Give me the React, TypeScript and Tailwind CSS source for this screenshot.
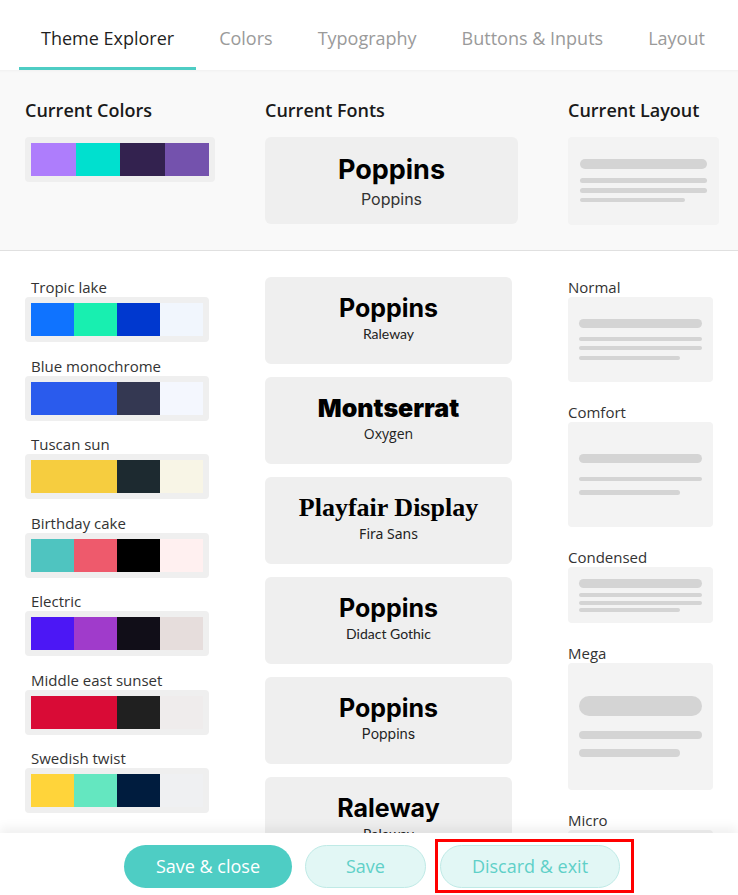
import React from "react";

const UI = { fontFamily: '"Open Sans", "Noto Sans", sans-serif' };

type Sw = { c: string; span?: number };

const current: Sw[] = [
  { c: "#ae7dfc" },
  { c: "#00e0cf" },
  { c: "#33224f" },
  { c: "#7452ad" },
];

const palettes: { name: string; sw: Sw[] }[] = [
  { name: "Tropic lake", sw: [{ c: "#0f73ff" }, { c: "#18efb0" }, { c: "#0038cf" }, { c: "#f1f6fd" }] },
  { name: "Blue monochrome", sw: [{ c: "#2a5bed", span: 2 }, { c: "#343852" }, { c: "#f4f7fe" }] },
  { name: "Tuscan sun", sw: [{ c: "#f6cd3f", span: 2 }, { c: "#1d2a30" }, { c: "#f8f5e6" }] },
  { name: "Birthday cake", sw: [{ c: "#4fc4c0" }, { c: "#ee5a6c" }, { c: "#000000" }, { c: "#fff0f0" }] },
  { name: "Electric", sw: [{ c: "#4c17f5" }, { c: "#a03bcb" }, { c: "#110e18" }, { c: "#e6dddc" }] },
  { name: "Middle east sunset", sw: [{ c: "#d90b36", span: 2 }, { c: "#202020" }, { c: "#efecec" }] },
  { name: "Swedish twist", sw: [{ c: "#ffd43a" }, { c: "#64e7c0" }, { c: "#001c3e" }, { c: "#eff0f2" }] },
  { name: "Aqua marine", sw: [{ c: "#2ec4d6" }, { c: "#1b8fa6" }, { c: "#0d2b3a" }, { c: "#eef8fa" }] },
];

const fonts: { t: string; tf: string; tw: string; ts: string; s: string; sf: string }[] = [
  { t: "Poppins", tf: '"Inter", sans-serif', tw: "font-bold", ts: "text-[25px]", s: "Raleway", sf: '"Lato", sans-serif' },
  { t: "Montserrat", tf: '"Inter", sans-serif', tw: "font-black", ts: "text-[25px]", s: "Oxygen", sf: '"Open Sans", sans-serif' },
  { t: "Playfair Display", tf: '"Liberation Serif", serif', tw: "font-bold", ts: "text-[26px]", s: "Fira Sans", sf: '"Noto Sans", sans-serif' },
  { t: "Poppins", tf: '"Inter", sans-serif', tw: "font-bold", ts: "text-[25px]", s: "Didact Gothic", sf: '"Lato", sans-serif' },
  { t: "Poppins", tf: '"Inter", sans-serif', tw: "font-bold", ts: "text-[25px]", s: "Poppins", sf: '"Inter", sans-serif' },
  { t: "Raleway", tf: '"Inter", sans-serif', tw: "font-bold", ts: "text-[25px]", s: "Raleway", sf: '"Lato", sans-serif' },
];

function Swatches({ sw, big }: { sw: Sw[]; big?: boolean }) {
  return (
    <div className={`flex rounded-[4px] bg-[#efefef] p-[6px] ${big ? "w-[190px]" : "w-[184px] h-[45px]"}`}>
      <div className={`flex w-full ${big ? "h-[33px]" : "h-[33px]"}`}>
        {sw.map((s, i) => (
          <div key={i} style={{ backgroundColor: s.c, flexGrow: s.span ?? 1, flexBasis: 0 }} />
        ))}
      </div>
    </div>
  );
}

const Bar = ({ cls }: { cls: string }) => <div className={`rounded-full bg-[#d4d4d4] ${cls}`} />;

function LayoutNormal() {
  return (
    <div className="h-[85px] w-[145px] rounded-[4px] bg-[#f3f3f3] px-[11px] pt-[22px]">
      <Bar cls="h-[9px] w-full" />
      <Bar cls="mt-[9px] h-[4px] w-full" />
      <Bar cls="mt-[5px] h-[4px] w-full" />
      <Bar cls="mt-[6px] h-[4px] w-[101px]" />
    </div>
  );
}

function LayoutComfort() {
  return (
    <div className="h-[105px] w-[145px] rounded-[4px] bg-[#f3f3f3] px-[11px] pt-[32px]">
      <Bar cls="h-[9px] w-full" />
      <Bar cls="mt-[14px] h-[4px] w-full" />
      <Bar cls="mt-[9px] h-[5px] w-[101px]" />
    </div>
  );
}

function LayoutCondensed() {
  return (
    <div className="h-[56px] w-[145px] rounded-[4px] bg-[#f3f3f3] px-[11px] pt-[12px]">
      <Bar cls="h-[9px] w-full" />
      <Bar cls="mt-[5px] h-[4px] w-full" />
      <Bar cls="mt-[4px] h-[4px] w-full" />
      <Bar cls="mt-[3px] h-[4px] w-[101px]" />
    </div>
  );
}

function LayoutMega() {
  return (
    <div className="h-[127px] w-[145px] rounded-[4px] bg-[#f3f3f3] px-[11px] pt-[33px]">
      <Bar cls="h-[20px] w-full" />
      <Bar cls="mt-[15px] h-[8px] w-full" />
      <Bar cls="mt-[10px] h-[8px] w-[101px]" />
    </div>
  );
}

const layouts: { name: string; el: React.ReactNode }[] = [
  { name: "Normal", el: <LayoutNormal /> },
  { name: "Comfort", el: <LayoutComfort /> },
  { name: "Condensed", el: <LayoutCondensed /> },
  { name: "Mega", el: <LayoutMega /> },
  { name: "Micro", el: <LayoutCondensed /> },
];

export default function App() {
  const tabs = ["Theme Explorer", "Colors", "Typography", "Buttons & Inputs", "Layout"];
  return (
    <div className="flex h-[895px] w-[738px] flex-col overflow-hidden bg-white" style={UI}>
      {/* Tabs */}
      <div className="flex h-[70px] shrink-0 items-stretch pl-[19px]">
        {tabs.map((t, i) => (
          <div
            key={t}
            className={`px-[22px] pt-[25px] text-[18px] leading-[26px] ${
              i === 0 ? "border-b-[3px] border-[#4ecdc4] text-[#1f1f1f]" : "border-b-[3px] border-transparent text-[#9a9a9a]"
            } ${i === 0 ? "" : "ml-[1px]"}`}
          >
            {t}
          </div>
        ))}
      </div>

      {/* Current */}
      <div className="grid h-[181px] shrink-0 grid-cols-[240px_303px_1fr] border-b border-[#e0e0e0] bg-[#f9f9f9] pl-[25px] pt-[27px] shadow-[inset_0_3px_3px_-2px_rgba(0,0,0,0.04)]">
        <div>
          <div className="mb-[14px] text-[18px] font-semibold leading-[26px] text-[#1a1a1a]">Current Colors</div>
          <Swatches sw={current} big />
        </div>
        <div>
          <div className="mb-[14px] text-[18px] font-semibold leading-[26px] text-[#1a1a1a]">Current Fonts</div>
          <div className="flex h-[87px] w-[253px] flex-col items-center justify-center rounded-[6px] bg-[#efefef]">
            <div className="text-[27px] font-bold leading-[34px] text-black" style={{ fontFamily: '"Inter", sans-serif' }}>
              Poppins
            </div>
            <div className="mt-[2px] text-[16px] leading-[20px] text-[#333]" style={{ fontFamily: '"Inter", sans-serif' }}>
              Poppins
            </div>
          </div>
        </div>
        <div>
          <div className="mb-[14px] text-[18px] font-semibold leading-[26px] text-[#1a1a1a]">Current Layout</div>
          <div className="h-[88px] w-[151px] rounded-[4px] bg-[#f3f3f3] px-[12px] pt-[22px]">
            <Bar cls="h-[10px] w-full" />
            <Bar cls="mt-[9px] h-[5px] w-full" />
            <Bar cls="mt-[5px] h-[5px] w-full" />
            <Bar cls="mt-[5px] h-[4px] w-[105px]" />
          </div>
        </div>
      </div>

      {/* List */}
      <div className="grid min-h-0 flex-1 grid-cols-[240px_303px_1fr] overflow-hidden pl-[25px] pt-[26px]">
        <div className="flex flex-col">
          {palettes.map((p) => (
            <div key={p.name} className="mb-[13.5px]">
              <div className="h-[20px] pl-[6px] text-[15px] leading-[20px] text-[#333]">{p.name}</div>
              <Swatches sw={p.sw} />
            </div>
          ))}
        </div>
        <div className="flex flex-col gap-[13px]">
          {fonts.map((f, i) => (
            <div
              key={i}
              className="flex h-[87px] w-[247px] shrink-0 flex-col items-center justify-center rounded-[6px] bg-[#efefef] pb-[6px]"
            >
              <div className={`${f.ts} ${f.tw} leading-[32px] text-black`} style={{ fontFamily: f.tf }}>
                {f.t}
              </div>
              <div className="mt-[1px] text-[14px] leading-[18px] text-[#222]" style={{ fontFamily: f.sf }}>
                {f.s}
              </div>
            </div>
          ))}
        </div>
        <div className="flex flex-col">
          {layouts.map((l) => (
            <div key={l.name} className="mb-[20px]">
              <div className="h-[20px] text-[15px] leading-[20px] text-[#333]">{l.name}</div>
              {l.el}
            </div>
          ))}
        </div>
      </div>

      {/* Bottom bar */}
      <div className="relative z-10 flex h-[62px] shrink-0 items-start justify-center gap-[13px] bg-white pl-[6px] pt-[12px] shadow-[0_-6px_10px_rgba(0,0,0,0.06)]">
        <button className="h-[43px] w-[168px] rounded-full bg-[#4ecdc4] text-[18px] text-white">Save &amp; close</button>
        <button className="h-[43px] w-[121px] rounded-full border border-[#bfeae6] bg-[#e2f7f5] text-[18px] text-[#5fd0c8]">
          Save
        </button>
        <div className="relative ml-[1px]">
          <button className="h-[43px] w-[180px] rounded-full border border-[#bfeae6] bg-[#e2f7f5] text-[18px] text-[#5fd0c8]">
            Discard &amp; exit
          </button>
          <div className="pointer-events-none absolute bottom-[-5px] left-[-5px] right-[-14px] top-[-6px] border-[3px] border-[#ff0000]" />
        </div>
      </div>
    </div>
  );
}
